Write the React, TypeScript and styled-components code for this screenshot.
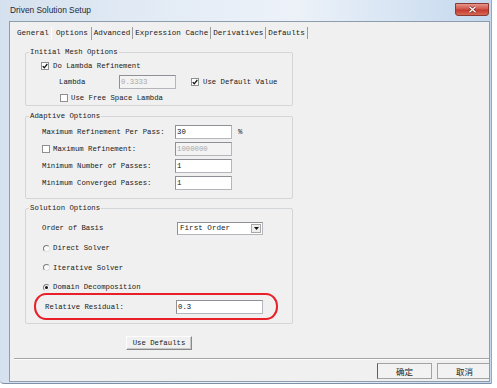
import styled, { createGlobalStyle } from "styled-components"

const mono = `"Liberation Mono", "DejaVu Sans Mono", monospace`

const GlobalStyle = createGlobalStyle`
  html, body { margin: 0; padding: 0; background: #fff; }
  #root { width: 497px; height: 388px; overflow: hidden; }
`

const Window = styled.div`
  width: 492px;
  height: 384px;
  box-sizing: border-box;
  display: flex;
  flex-direction: column;
  background: linear-gradient(90deg, #d5e1ee 0%, #e4ecf6 35%, #edf2f9 60%, #d3e2f2 85%, #c4d8ee 100%);
  border-right: 1px solid #93a7be;
  border-bottom: 1px solid #7e91a8;
  border-bottom-left-radius: 4px;
`

const TitleBar = styled.div`
  height: 21px;
  flex: none;
  display: flex;
  justify-content: space-between;
  padding: 0 2px 0 10px;
`

const Title = styled.span`
  font: 8.4px "Liberation Sans", Arial, sans-serif;
  line-height: 21px;
  color: #1d2a3a;
`

const CloseButton = styled.div`
  width: 32px;
  height: 11px;
  margin-top: 3px;
  border: 1px solid #8a3b36;
  border-radius: 0 0 3px 3px;
  background: linear-gradient(180deg, #e6958a 0%, #d0574b 45%, #c33a2e 55%, #d66a55 100%);
  display: flex;
  align-items: center;
  justify-content: center;
`

const Frame = styled.div`
  flex: 1;
  padding: 0 1px 1px 9px;
  display: flex;
`

const Client = styled.div`
  flex: 1;
  background: #f0f0f0;
  border: 1px solid #8f9cab;
  overflow: hidden;
  display: flex;
  flex-direction: column;
  font: 7.3px ${mono};
  color: #1a1a1a;
`

const TabStrip = styled.div`
  margin-top: 3px;
  height: 16px;
  padding-left: 5px;
  display: flex;
  align-items: center;
  font-size: 7.6px;
`

const Tab = styled.span<{ $active?: boolean; $sep?: boolean }>`
  padding: ${p => (p.$active ? "0 3px 1px 4px" : "0 2px")};
  line-height: 12px;
  border-left: ${p => (p.$active ? "1px solid #fff" : "none")};
  border-right: ${p => (p.$sep ? "1px solid #9c9c9c" : "none")};
  white-space: pre;
`

const TabPage = styled.div`
  flex: 1;
  display: flex;
  flex-direction: column;
  padding-left: 15px;
`

const GroupBox = styled.div<{ $top: number; $pt: number; $pb: number }>`
  position: relative;
  width: 268px;
  box-sizing: border-box;
  margin-top: ${p => p.$top}px;
  padding: ${p => p.$pt}px 0 ${p => p.$pb}px;
  border: 1px solid #d3d6d9;
  border-radius: 2px;
`

const Legend = styled.span`
  position: absolute;
  top: -6px;
  left: 3px;
  padding: 0 1px;
  line-height: 11px;
  background: #f0f0f0;
  white-space: pre;
`

const Row = styled.div<{ $h: number; $indent: number }>`
  height: ${p => p.$h}px;
  display: flex;
  align-items: center;
  padding-left: ${p => p.$indent}px;
`

const Label = styled.span<{ $w?: number }>`
  width: ${p => (p.$w ? `${p.$w}px` : "auto")};
  flex: none;
  white-space: pre;
  display: inline-flex;
  align-items: center;
`

const CheckLabel = styled.span<{ $gap?: number; $ml?: number }>`
  display: inline-flex;
  align-items: center;
  gap: ${p => p.$gap ?? 4}px;
  margin-left: ${p => p.$ml ?? 0}px;
  white-space: pre;
`

const Box = styled.span`
  width: 8px;
  height: 8px;
  box-sizing: border-box;
  border: 1px solid #8e8f8f;
  background: #fff;
  display: inline-flex;
  align-items: center;
  justify-content: center;
  flex: none;
`

const RadioDot = styled.span<{ $on?: boolean }>`
  width: 7px;
  height: 7px;
  box-sizing: border-box;
  border-radius: 50%;
  border: 1px solid;
  border-color: #7d7d7d #e4e4e4 #e4e4e4 #7d7d7d;
  background: #fafafa;
  display: inline-flex;
  align-items: center;
  justify-content: center;
  flex: none;

  &::after {
    content: "";
    width: 3px;
    height: 3px;
    border-radius: 50%;
    background: ${p => (p.$on ? "#111" : "transparent")};
  }
`

const TextBox = styled.input<{ $w: number }>`
  width: ${p => p.$w}px;
  height: 14px;
  box-sizing: border-box;
  margin: 0;
  padding: 0 1px;
  border: 1px solid #b4b6bb;
  border-top-color: #8f9095;
  border-left-color: #8f9095;
  background: ${p => (p.disabled ? "#f3f3f3" : "#fff")};
  color: ${p => (p.disabled ? "#a9a9a9" : "#111")};
  font: 7.3px ${mono};
  outline: none;
`

const Percent = styled.span`
  margin-left: 6px;
`

const ComboBox = styled.div`
  width: 86px;
  height: 13px;
  box-sizing: border-box;
  border: 1px solid #8f9095;
  border-right-color: #b4b6bb;
  border-bottom-color: #b4b6bb;
  background: #fff;
  display: flex;
  align-items: center;
  justify-content: space-between;
  padding-left: 2px;
  font-size: 7.6px;
`

const ArrowButton = styled.span`
  width: 10px;
  height: 9px;
  margin-right: 1px;
  box-sizing: border-box;
  border: 1px solid #a8a8a8;
  background: #eeeeee;
  display: inline-flex;
  align-items: center;
  justify-content: center;
`

// red hand-drawn highlight laid over the residual row
const Annotation = styled.div`
  position: absolute;
  left: 8px;
  top: 84px;
  width: 244px;
  height: 27px;
  box-sizing: border-box;
  border: 2.5px solid #e8202a;
  border-radius: 12px / 13px;
  pointer-events: none;
`

const DefaultsHolder = styled.div`
  width: 268px;
  margin-top: 12px;
  display: flex;
  justify-content: center;
`

const PushButton = styled.div<{ $w: number; $h: number }>`
  width: ${p => p.$w}px;
  height: ${p => p.$h}px;
  box-sizing: border-box;
  flex: none;
  border: 1px solid;
  border-color: #fdfdfd #8a8a8a #8a8a8a #fdfdfd;
  box-shadow: inset -1px -1px 0 #c8c8c8;
  background: #f0f0f0;
  display: flex;
  align-items: center;
  justify-content: center;
  white-space: pre;
`

const ButtonRow = styled.div`
  height: 18px;
  margin-left: 4px;
  border-top: 1px solid #a5a5a5;
  box-shadow: 0 1px 0 #fdfdfd inset;
  display: flex;
  justify-content: flex-end;
  gap: 5px;
  padding-top: 4px;
  margin-right: -3px;
`

const DialogButton = styled.div<{ $dark?: boolean }>`
  width: 55px;
  height: 16px;
  box-sizing: border-box;
  border: 1px solid #a3a3a3;
  border-left-color: ${p => (p.$dark ? "#5e5e5e" : "#a3a3a3")};
  background: #f2f2f2;
  display: flex;
  justify-content: center;
  padding-top: 2px;
  font: 8.5px "Noto Sans CJK SC", "Noto Sans", sans-serif;
  color: #222;
  line-height: 10px;
`

const CheckBox = ({ checked }: { checked?: boolean }) => (
  <Box>
    {checked && (
      <svg width="6" height="6" viewBox="0 0 6 6">
        <path d="M0.7 3.1 L2.3 4.8 L5.3 1" stroke="#111" strokeWidth="1.3" fill="none" />
      </svg>
    )}
  </Box>
)

const tabs = ["General", "Options", "Advanced", "Expression Cache", "Derivatives", "Defaults"]

export default function App() {
  return (
    <>
      <GlobalStyle />
      <Window>
        <TitleBar>
          <Title>Driven Solution Setup</Title>
          <CloseButton>
            <svg width="9" height="7" viewBox="0 0 9 7">
              <path d="M1.5 0.8 L7.5 6.2 M7.5 0.8 L1.5 6.2" stroke="#6b2620" strokeWidth="2.6" />
              <path d="M1.5 0.8 L7.5 6.2 M7.5 0.8 L1.5 6.2" stroke="#fff" strokeWidth="1.4" />
            </svg>
          </CloseButton>
        </TitleBar>
        <Frame>
          <Client>
            <TabStrip>
              {tabs.map((t, i) => (
                <Tab key={t} $active={i === 1} $sep={i > 0}>
                  {t}
                </Tab>
              ))}
            </TabStrip>
            <TabPage>
              <GroupBox $top={11} $pt={5} $pb={0}>
                <Legend>Initial Mesh Options</Legend>
                <Row $h={16} $indent={15}>
                  <CheckLabel>
                    <CheckBox checked />
                    Do Lambda Refinement
                  </CheckLabel>
                </Row>
                <Row $h={16} $indent={33}>
                  <Label $w={60}>Lambda</Label>
                  <TextBox $w={57} disabled value="0.3333" readOnly />
                  <CheckLabel $ml={15}>
                    <CheckBox checked />
                    Use Default Value
                  </CheckLabel>
                </Row>
                <Row $h={15} $indent={34}>
                  <CheckLabel $gap={3}>
                    <CheckBox />
                    Use Free Space Lambda
                  </CheckLabel>
                </Row>
              </GroupBox>

              <GroupBox $top={10} $pt={6} $pb={7}>
                <Legend>Adaptive Options</Legend>
                <Row $h={17} $indent={16}>
                  <Label $w={133}>Maximum Refinement Per Pass:</Label>
                  <TextBox $w={57} value="30" readOnly />
                  <Percent>%</Percent>
                </Row>
                <Row $h={17} $indent={16}>
                  <Label $w={133}>
                    <CheckLabel $gap={3}>
                      <CheckBox />
                      Maximum Refinement:
                    </CheckLabel>
                  </Label>
                  <TextBox $w={57} disabled value="1000000" readOnly />
                </Row>
                <Row $h={17} $indent={16}>
                  <Label $w={133}>Minimum Number of Passes:</Label>
                  <TextBox $w={57} value="1" readOnly />
                </Row>
                <Row $h={17} $indent={16}>
                  <Label $w={133}>Minimum Converged Passes:</Label>
                  <TextBox $w={57} value="1" readOnly />
                </Row>
              </GroupBox>

              <GroupBox $top={9} $pt={9} $pb={7}>
                <Legend>Solution Options</Legend>
                <Row $h={20} $indent={16}>
                  <Label $w={135}>Order of Basis</Label>
                  <ComboBox>
                    First Order
                    <ArrowButton>
                      <svg width="5" height="3" viewBox="0 0 5 3">
                        <path d="M0 0 H5 L2.5 3 Z" fill="#111" />
                      </svg>
                    </ArrowButton>
                  </ComboBox>
                </Row>
                <Row $h={20} $indent={17}>
                  <CheckLabel $gap={3}>
                    <RadioDot />
                    Direct Solver
                  </CheckLabel>
                </Row>
                <Row $h={19} $indent={17}>
                  <CheckLabel $gap={3}>
                    <RadioDot />
                    Iterative Solver
                  </CheckLabel>
                </Row>
                <Row $h={20} $indent={17}>
                  <CheckLabel $gap={3}>
                    <RadioDot $on />
                    Domain Decomposition
                  </CheckLabel>
                </Row>
                <Row $h={19} $indent={19}>
                  <Label $w={131}>Relative Residual:</Label>
                  <TextBox $w={87} value="0.3" readOnly />
                </Row>
                <Annotation />
              </GroupBox>

              <DefaultsHolder>
                <PushButton $w={66} $h={14}>Use Defaults</PushButton>
              </DefaultsHolder>
            </TabPage>
            <ButtonRow>
              <DialogButton $dark>确定</DialogButton>
              <DialogButton>取消</DialogButton>
            </ButtonRow>
          </Client>
        </Frame>
      </Window>
    </>
  )
}
